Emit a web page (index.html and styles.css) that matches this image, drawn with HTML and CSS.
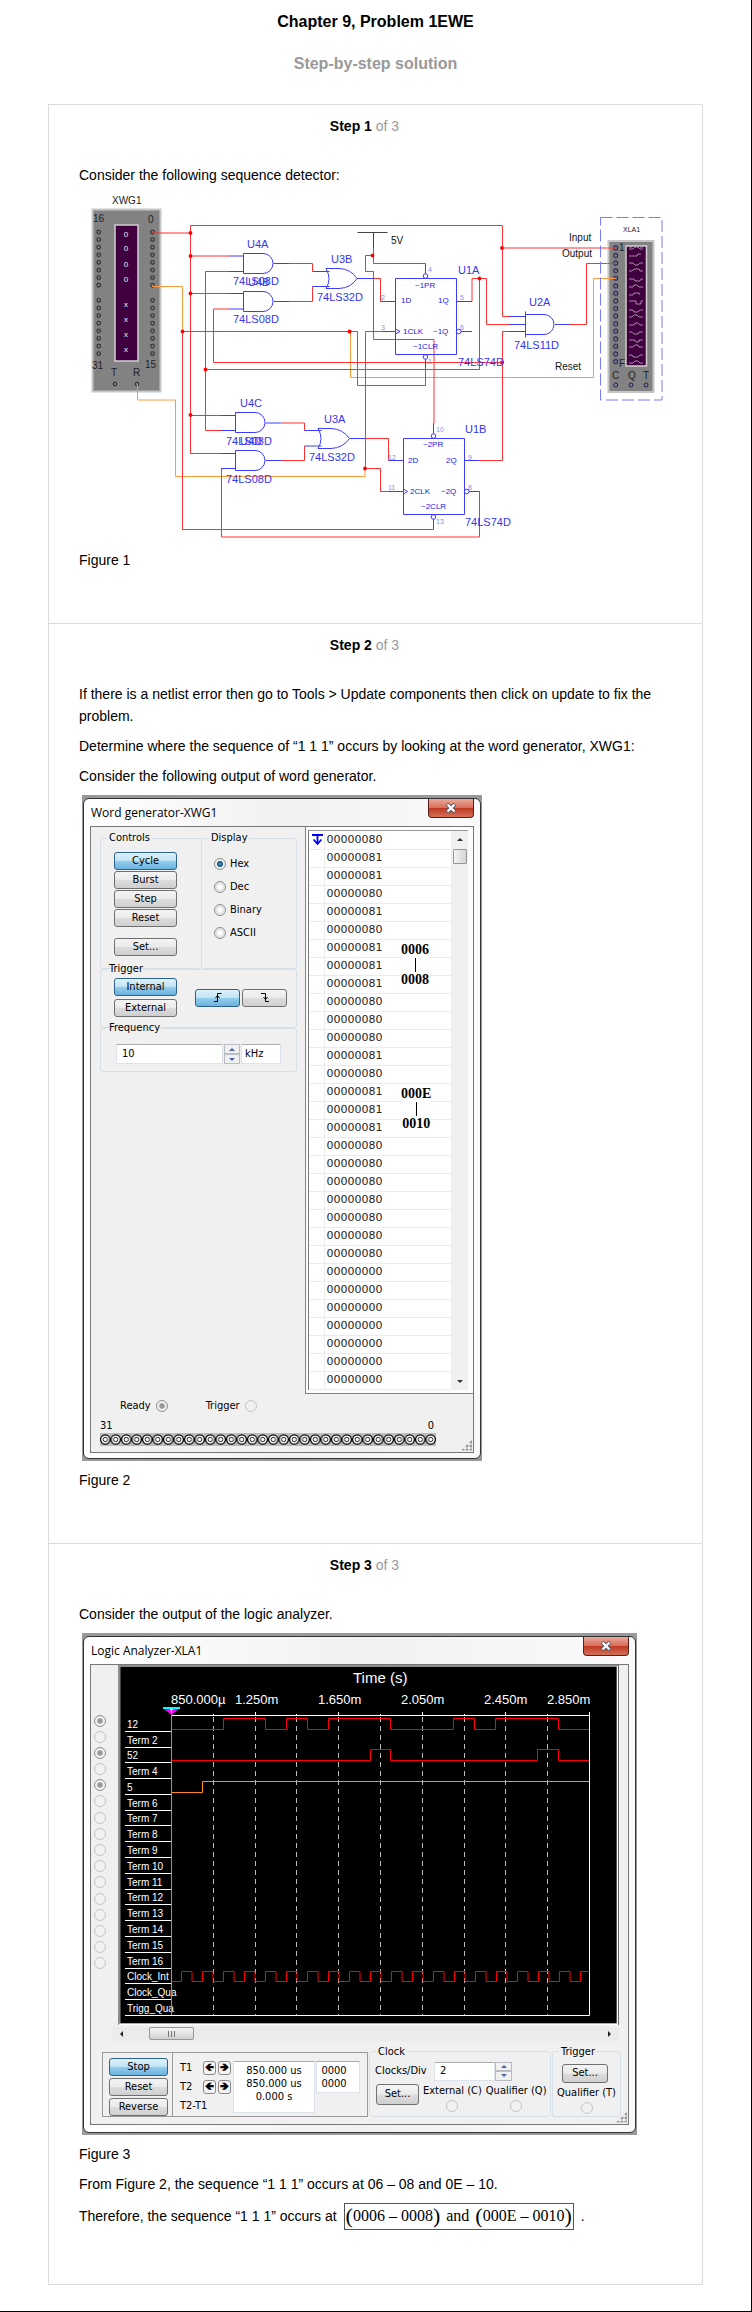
FILE: index.html
```html
<!DOCTYPE html>
<html lang="en">
<head>
<meta charset="utf-8">
<meta name="viewport" content="width=device-width, initial-scale=1">
<title>Chapter 9, Problem 1EWE</title>
<link rel="stylesheet" href="styles.css">
</head>
<body>
<header class="page-head">
<h1 class="title">Chapter 9, Problem 1EWE</h1>
<p class="subtitle">Step-by-step solution</p>
</header>
<main class="steps">
<section class="step">
<h2 class="step-title">Step 1 <span class="step-of">of 3</span></h2>
<div class="step-body">
<p>Consider the following sequence detector:</p>
<svg class="circuit" viewBox="79 194 600 347" role="img" aria-label="Sequence detector circuit">
<defs>
<pattern id="pinsL" x="94" y="228" width="10" height="7.6" patternUnits="userSpaceOnUse"><circle cx="4.7" cy="4" r="1.8" class="pin"/></pattern>
<pattern id="pinsR" x="148" y="228" width="10" height="7.6" patternUnits="userSpaceOnUse"><circle cx="4.5" cy="4" r="1.8" class="pin"/></pattern>
<pattern id="pinsA" x="611" y="244.2" width="10" height="7.57" patternUnits="userSpaceOnUse"><circle cx="4.7" cy="3.8" r="2" class="pin navy"/></pattern>
</defs>
<!-- word generator -->
<rect x="92.5" y="209.500" width="68" height="182" fill="#828282" stroke="#c6c6c6" stroke-width="2"/>
<rect x="94" y="228" width="10" height="60.800" fill="url(#pinsL)"/>
<rect x="94" y="296.400" width="10" height="60.800" fill="url(#pinsL)"/>
<rect x="148" y="228" width="10" height="60.800" fill="url(#pinsR)"/>
<rect x="148" y="296.400" width="10" height="60.800" fill="url(#pinsR)"/>
<circle cx="115" cy="384" r="1.800" class="pin"/><circle cx="137" cy="384" r="1.800" class="pin"/>
<rect x="115" y="225" width="23" height="136" fill="#400040" stroke="#d0d0d0" stroke-width="1.500"/>
<g class="t-lamp"><text x="126" y="237">0</text><text x="126" y="251">0</text><text x="126" y="267">0</text><text x="126" y="282">0</text><text x="126" y="307">x</text><text x="126" y="322">x</text><text x="126" y="337">x</text><text x="126" y="352">x</text></g>
<g class="t-dev"><text x="112" y="204">XWG1</text><text x="93" y="222">16</text><text x="148" y="223">0</text><text x="92" y="369">31</text><text x="145" y="368">15</text><text x="111" y="376">T</text><text x="133" y="376">R</text></g>
<!-- wires -->
<g class="wire orange">
<path d="M152 286.500H182.500V331.500"/>
<path d="M350.500 331.500V377.500H593.500V278.500H616"/>
<path d="M137.500 384V400H175.500V476.500H365V468"/>
</g>
<g class="wire red">
<path d="M152 233H190.500"/>
<path d="M190.500 453.500V225.500H502.500V316.500H509"/>
<path d="M190.500 256H229M190.500 293.500H229M190.500 415.500H221M190.500 453.500H221"/>
<path d="M229 271.500H205.500V430.500H221M205.500 369.500H479.500V278.500"/>
<path d="M229 309H213.500V362.500H502"/>
<path d="M182.500 331.500H357.500V385.500H425.500V368"/>
<path d="M182.500 331.500V529.500H433.500"/>
<path d="M382 331.500H365.500V468.500H380.500V491.500H388"/>
<path d="M289 263.500H312.500V271.500M289 301.500H312.500V286.500"/>
<path d="M281 423H304.500V430.500M281 460.500H304.500V446"/>
<path d="M365 438.500H388.500V460.500"/>
<path d="M373.500 278.500H380.500V301.500"/>
<path d="M373.500 248V263.500H425.500"/>
<path d="M373.500 255.500H365.500V271.500H373.500V339.500H434V423"/>
<path d="M472 301.500V278.500H486.500V324.500H509"/>
<path d="M570 324.500H586.500V263.500H616M502.500 248H616"/>
<path d="M509 331.500H502.500V460.500H479"/>
<path d="M221.500 468.500V537H479.500V491.500"/>
</g>
<g fill="red"><circle cx="190.500" cy="233" r="1.900"/><circle cx="190.500" cy="256" r="1.900"/><circle cx="190.500" cy="293.500" r="1.900"/><circle cx="190.500" cy="415" r="1.900"/><circle cx="205.500" cy="369.500" r="1.900"/><circle cx="182.500" cy="331.500" r="1.900"/><circle cx="349.500" cy="331.500" r="1.900"/><circle cx="372.500" cy="255.500" r="1.900"/><circle cx="365" cy="468.500" r="1.900"/><circle cx="479.500" cy="278.500" r="1.900"/><circle cx="502" cy="248" r="1.900"/><circle cx="502" cy="362.500" r="1.900"/></g>
<path class="wire black" d="M357.500 232.500H387.500M373.500 232.500V248"/>
<!-- gates and flip-flops -->
<g class="wire blue">
<path d="M229 256H243M229 271.500H243M273.500 263.500H289M229 293.500H243M229 309H243M273.500 301.500H289"/>
<path d="M243.500 253.500H263A10 10 0 0 1 263 273.500H243.500ZM243.500 291.500H263A10 10 0 0 1 263 311.500H243.500Z"/>
<path d="M312.500 271.500H329.500M312.500 286.500H329.500M357 278.500H373.500M326 268.500H339Q351 269 357 278.500Q351 288 339 288.500H326Q332 279 326 268.500Z"/>
<path d="M221 415.500H235M221 430.500H235M265.500 423H281M221 453.500H235M221 468.500H235M265.500 460.500H281"/>
<path d="M235.500 412.500H255A10 10 0 0 1 255 432.500H235.500ZM235.500 450.500H255A10 10 0 0 1 255 470.500H235.500Z"/>
<path d="M304.500 430.500H321.500M304.500 446H321.500M349.500 438.500H365M318 428.500H331Q343 429 349.500 438.500Q343 448 331 448.500H318Q324 439 318 428.500Z"/>
<path d="M395.500 278.500H456.500V354.500H395.500ZM380.500 301.500H395.500M382 331.500H395.500M395.500 329L400 331.500L395.500 334M456.500 301.500H472M461 331.500H472M425.500 263.500V274M425.500 359V368"/>
<circle cx="425.500" cy="276" r="2.300"/><circle cx="425.500" cy="357" r="2.300"/><circle cx="458.700" cy="331.500" r="2.300"/>
<path d="M403.500 438.500H464.500V514.500H403.500ZM388.500 460.500H403.500M388 491.500H403.500M403.500 489L407.500 491.500L403.500 494M464.500 460.500H479M469 491.500H479.500M433.500 423V433.500M433.500 519V529.500"/>
<circle cx="433.500" cy="436" r="2.300"/><circle cx="433.500" cy="517" r="2.300"/><circle cx="466.700" cy="491.500" r="2.300"/>
<path d="M509 316.500H525M509 324.500H525M509 331.500H525M525.500 311.500V337.500M525.500 314.500H544A10 10 0 0 1 544 334.500H525.500M555 324.500H570"/>
</g>
<g class="t-part">
<text x="247" y="248">U4A</text><text x="233" y="285">74LS08D</text><text x="248" y="286">U4B</text><text x="233" y="323">74LS08D</text><text x="331" y="263">U3B</text><text x="317" y="301">74LS32D</text>
<text x="240" y="407">U4C</text><text x="226" y="445">74LS08D</text><text x="240" y="445">U4D</text><text x="226" y="483">74LS08D</text><text x="324" y="423">U3A</text><text x="309" y="461">74LS32D</text>
<text x="458" y="274">U1A</text><text x="458" y="366">74LS74D</text><text x="465" y="433">U1B</text><text x="465" y="526">74LS74D</text><text x="529" y="306">U2A</text><text x="514" y="349">74LS11D</text>
</g>
<g class="t-pin"><text x="415" y="288">~1PR</text><text x="401" y="303">1D</text><text x="438" y="303">1Q</text><text x="403" y="334">1CLK</text><text x="433" y="334">~1Q</text><text x="413" y="349">~1CLR</text>
<text x="423" y="447">~2PR</text><text x="408" y="463">2D</text><text x="446" y="463">2Q</text><text x="410" y="494">2CLK</text><text x="441" y="494">~2Q</text><text x="421" y="509">~2CLR</text></g>
<g class="t-num"><text x="428" y="272">4</text><text x="381" y="300">2</text><text x="460" y="300">5</text><text x="381" y="330">3</text><text x="460" y="330">6</text><text x="428" y="364">1</text><text x="436" y="432">10</text><text x="388" y="460">12</text><text x="468" y="460">9</text><text x="388" y="490">11</text><text x="468" y="490">8</text><text x="436" y="524">13</text></g>
<g class="t-net"><text x="391" y="244">5V</text><text x="569" y="241">Input</text><text x="562" y="257">Output</text><text x="555" y="370">Reset</text></g>
<!-- logic analyzer -->
<path d="M600.500 217.500H662V400H600.500Z" fill="none" stroke="#7a7aff" stroke-dasharray="12 4"/>
<rect x="608.500" y="241" width="45" height="151" fill="#828282" stroke="#c6c6c6" stroke-width="2"/>
<rect x="626" y="246" width="20.500" height="120" fill="#400040" stroke="#d0d0d0" stroke-width="1.500"/>
<rect x="611" y="244.200" width="10" height="121.120" fill="url(#pinsA)"/>
<path class="wire red" d="M608 248H615.500M608 263.500H615.500"/><path class="wire orange" d="M608 278.500H615.500"/>
<circle cx="615.700" cy="385" r="2" class="pin navy"/><circle cx="631" cy="385" r="2" class="pin navy"/><circle cx="646" cy="385" r="2" class="pin navy"/>
<path fill="none" stroke="#bcaebc" stroke-width=".8" d="M629 249h4l2-2h3l2 2h3M629 256h8l1-2h3M629 263h4l2 2h3l2-2h3M629 271h3l2-2h5l1 2h3M629 279h5l1 2h5l1-2h2M629 287h4l1-2h3l2 2h4M629 295h4l1-2h5l1 2M629 301h7v3h5v-3h2M629 310h4l1 2h4l2-2h3M629 317h3l2-2h3l2 2h4M629 325h5l1-2h3l2 2h3M629 332h3l2 2h4l1-2h4M629 340h6l1 2h3v-2h4M629 347h4l2-2h3l1 2h4M629 355h3l1 2h5l2-2h3M629 363h4l2-2h3l2 2h3M629 247h3M640 247h3"/>
<g class="t-dev"><text x="619" y="251">1</text><text x="619" y="367">F</text><text x="612" y="379">C</text><text x="628" y="379">Q</text><text x="643" y="379">T</text></g>
<text class="t-xla" x="623" y="232">XLA1</text>
</svg>
<p>Figure 1</p>
</div>
</section>

<section class="step">
<h2 class="step-title">Step 2 <span class="step-of">of 3</span></h2>
<div class="step-body">
<p>If there is a netlist error then go to Tools &gt; Update components then click on update to fix the problem.</p>
<p>Determine where the sequence of “1 1 1” occurs by looking at the word generator, XWG1:</p>
<p>Consider the following output of word generator.</p>
<div class="shot shot-word">
<div class="window">
<div class="titlebar"><span>Word generator-XWG1</span><button class="close" type="button" aria-label="Close word generator"><svg width="12" height="10" viewBox="0 0 12 10"><path d="M2 1L10 9M10 1L2 9" stroke="#555a6a" stroke-width="4"/><path d="M2.500 1.500L9.500 8.500M9.500 1.500L2.500 8.500" stroke="#fff" stroke-width="2.200"/></svg></button></div>
<div class="panel">
<div class="word-top">
<div class="word-left">
<div class="pair">
<fieldset class="group controls"><legend>Controls</legend>
<button class="btn on" type="button">Cycle</button><button class="btn" type="button">Burst</button><button class="btn" type="button">Step</button><button class="btn" type="button">Reset</button><button class="btn set" type="button">Set...</button>
</fieldset>
<fieldset class="group display"><legend>Display</legend>
<label><input type="radio" name="disp" checked>Hex</label><label><input type="radio" name="disp">Dec</label><label><input type="radio" name="disp">Binary</label><label><input type="radio" name="disp">ASCII</label>
</fieldset>
</div>
<fieldset class="group joined"><legend>Trigger</legend>
<div class="trig">
<div class="trig-src"><button class="btn on" type="button">Internal</button><button class="btn" type="button">External</button></div>
<div class="trig-edge"><button class="btn on" type="button" aria-label="Rising edge"><svg width="8" height="9" viewBox="0 0 8 9"><path d="M0 8.500H3.500V.5H7.500M1.500 5L3.500 2.500L5.500 5" fill="none" stroke="#000"/></svg></button><button class="btn" type="button" aria-label="Falling edge"><svg width="8" height="9" viewBox="0 0 8 9"><path d="M0 .5H4.500V8.500H8M2.500 4L4.500 6.500L6.500 4" fill="none" stroke="#000"/></svg></button></div>
</div>
</fieldset>
<fieldset class="group joined"><legend>Frequency</legend>
<div class="freq"><input class="box" type="text" value="10" aria-label="Frequency"><span class="spin"><button type="button" aria-label="Increase frequency"></button><button class="down" type="button" aria-label="Decrease frequency"></button></span><input class="box unit" type="text" value="kHz" aria-label="Unit"></div>
</fieldset>
</div>
<div class="list-frame">
<div class="list">
<table class="words"><tbody>
<tr><td><svg width="11" height="12" viewBox="0 0 11 12"><path d="M0 1H11M5.500 1V9M1.500 5.500L5.500 10L9.500 5.500M5.500 5V10" fill="none" stroke="#00f" stroke-width="1.800"/></svg></td><td>00000080</td></tr>
<tr><td></td><td>00000081</td></tr><tr><td></td><td>00000081</td></tr><tr><td></td><td>00000080</td></tr><tr><td></td><td>00000081</td></tr><tr><td></td><td>00000080</td></tr><tr><td></td><td>00000081</td></tr><tr><td></td><td>00000081</td></tr><tr><td></td><td>00000081</td></tr><tr><td></td><td>00000080</td></tr><tr><td></td><td>00000080</td></tr><tr><td></td><td>00000080</td></tr><tr><td></td><td>00000081</td></tr><tr><td></td><td>00000080</td></tr><tr><td></td><td>00000081</td></tr><tr><td></td><td>00000081</td></tr><tr><td></td><td>00000081</td></tr><tr><td></td><td>00000080</td></tr><tr><td></td><td>00000080</td></tr><tr><td></td><td>00000080</td></tr><tr><td></td><td>00000080</td></tr><tr><td></td><td>00000080</td></tr><tr><td></td><td>00000080</td></tr><tr><td></td><td>00000080</td></tr><tr><td></td><td>00000000</td></tr><tr><td></td><td>00000000</td></tr><tr><td></td><td>00000000</td></tr><tr><td></td><td>00000000</td></tr><tr><td></td><td>00000000</td></tr><tr><td></td><td>00000000</td></tr><tr><td></td><td>00000000</td></tr>
</tbody></table>
<div class="vscroll"><span class="tri up"></span><span class="vthumb"></span><span class="tri dn"></span></div>
<div class="note note-a"><b>0006</b><i></i><b>0008</b></div>
<div class="note note-b"><b>000E</b><i></i><b>0010</b></div>
</div>
</div>
</div>
<div class="status"><label>Ready<input class="dim" type="radio" name="ready" checked></label><label>Trigger<input class="faint" type="radio" name="trg"></label></div>
<div class="bits"><div class="bit-ends"><span>31</span><span>0</span></div>
<svg width="336" height="13" viewBox="0 0 336 13" aria-hidden="true"><defs><pattern id="bit" width="10.5" height="13" patternUnits="userSpaceOnUse"><rect width="11" height="13" fill="#bdbdbd"/><circle cx="5.250" cy="6.500" r="4.700" fill="#fff" stroke="#000" stroke-width="1.200"/><circle cx="5.250" cy="6.500" r="2.200" fill="#fff" stroke="#000" stroke-width=".9"/></pattern></defs><rect width="336" height="13" fill="url(#bit)"/></svg></div>
<span class="grip"></span>
</div>
</div>
</div>
<p>Figure 2</p>
</div>
</section>

<section class="step">
<h2 class="step-title">Step 3 <span class="step-of">of 3</span></h2>
<div class="step-body">
<p>Consider the output of the logic analyzer.</p>
<div class="shot shot-logic">
<div class="window">
<div class="titlebar"><span>Logic Analyzer-XLA1</span><button class="close" type="button" aria-label="Close logic analyzer"><svg width="12" height="10" viewBox="0 0 12 10"><path d="M2 1L10 9M10 1L2 9" stroke="#555a6a" stroke-width="4"/><path d="M2.500 1.500L9.500 8.500M9.500 1.500L2.500 8.500" stroke="#fff" stroke-width="2.200"/></svg></button></div>
<div class="panel">
<div class="scope-row">
<div class="terms"><input class="dim" type="radio" name="r1" checked aria-label="Term 1"><input class="faint" type="radio" name="r2" aria-label="Term 2"><input class="dim" type="radio" name="r3" checked aria-label="Term 3"><input class="faint" type="radio" name="r4" aria-label="Term 4"><input class="dim" type="radio" name="r5" checked aria-label="Term 5"><input class="faint" type="radio" name="r6" aria-label="Term 6"><input class="faint" type="radio" name="r7" aria-label="Term 7"><input class="faint" type="radio" name="r8" aria-label="Term 8"><input class="faint" type="radio" name="r9" aria-label="Term 9"><input class="faint" type="radio" name="r10" aria-label="Term 10"><input class="faint" type="radio" name="r11" aria-label="Term 11"><input class="faint" type="radio" name="r12" aria-label="Term 12"><input class="faint" type="radio" name="r13" aria-label="Term 13"><input class="faint" type="radio" name="r14" aria-label="Term 14"><input class="faint" type="radio" name="r15" aria-label="Term 15"><input class="faint" type="radio" name="r16" aria-label="Term 16"></div>
<svg class="scope" viewBox="118 1665 501 360" role="img" aria-label="Logic analyzer traces">
<rect x="118" y="1665" width="501" height="360" fill="#8c8c8c"/><path d="M617.500 1666V2024.500H119" fill="none" stroke="#fff" stroke-width="1.500"/><path d="M618.500 1665V2025" stroke="#666"/>
<rect x="120.500" y="1667" width="496" height="356" fill="#000"/>
<g class="t-axis"><text x="353" y="1683" class="big">Time (s)</text><text x="171" y="1704">850.000µ</text><text x="235" y="1704">1.250m</text><text x="318" y="1704">1.650m</text><text x="401" y="1704">2.050m</text><text x="484" y="1704">2.450m</text><text x="547" y="1704">2.850m</text></g>
<path class="grid" d="M213.500 1717V2015M255.500 1717V2015M296.500 1717V2015M338.500 1717V2015M380.500 1717V2015M422.500 1717V2015M464.500 1717V2015M505.500 1717V2015M547.500 1717V2015"/>
<path class="axis" d="M171 1715.500H589.500M589.500 1712V2015.500H125M213.500 1714V1715M255.500 1712V1715M296.500 1714V1715M338.500 1712V1715M380.500 1714V1715M422.500 1712V1715M464.500 1714V1715M505.500 1712V1715M547.500 1714V1715"/>
<path class="axis" d="M125 1731.500H171M125 1747.500H171M125 1762.500H171M125 1778.500H171M125 1794.500H171M125 1810.500H171M125 1825.500H171M125 1841.500H171M125 1857.500H171M125 1873.500H171M125 1889.500H171M125 1904.500H171M125 1920.500H171M125 1936.500H171M125 1952.500H171M125 1968.500H171M125 1983.500H171M125 1999.500H171"/>
<g class="t-term"><text x="127" y="1728">12</text><text x="127" y="1744">Term 2</text><text x="127" y="1759">52</text><text x="127" y="1775">Term 4</text><text x="127" y="1791">5</text><text x="127" y="1807">Term 6</text><text x="127" y="1822">Term 7</text><text x="127" y="1838">Term 8</text><text x="127" y="1854">Term 9</text><text x="127" y="1870">Term 10</text><text x="127" y="1886">Term 11</text><text x="127" y="1901">Term 12</text><text x="127" y="1917">Term 13</text><text x="127" y="1933">Term 14</text><text x="127" y="1949">Term 15</text><text x="127" y="1965">Term 16</text><text x="127" y="1980">Clock_Int</text><text x="127" y="1996">Clock_Qua</text><text x="127" y="2012">Trigg_Qua</text></g>
<g class="trace">
<path d="M171 1729.500H223.500V1718.500H265.500V1729.500H286.500V1718.500H307.500V1729.500H328.500V1718.500H390.500V1729.500H453.500V1718.500H474.500V1729.500H495.500V1718.500H558.500V1729.500H589"/>
<path d="M171 1760.500H370.500V1749.500H390.500V1760.500H537.500V1749.500H558.500V1760.500H589"/>
<path class="amber" d="M171 1792.500H202.500V1781.500H589"/>
<path d="M171 1981.500h10.500v-10h10.500v10h10.500v-10h10.500v10h10.500v-10h10.500v10h10.500v-10h10.500v10h10.500v-10h10.500v10h10.500v-10h10.500v10h10.500v-10h10.500v10h10.500v-10h10.500v10h10.500v-10h10.500v10h10.500v-10h10.500v10h10.500v-10h10.500v10h10.500v-10h10.500v10h10.500v-10h10.500v10h10.500v-10h10.500v10h10.500v-10h10.500v10h10.500v-10h10.500v10h10.500v-10h10.500v10h10.500v-10h10.500v10h10.500v-10h10.500v10h10.500v-10h9"/>
</g>
<path d="M171.500 1712V2015" stroke="#0f0"/>
<path d="M163 1708H180" stroke="#0ff" stroke-width="2"/><path d="M164.500 1709H178.500L171.500 1715Z" fill="#f0f"/><path d="M170 1709.500h3M171.500 1709V1713" stroke="#ff0"/>
</svg>
</div>
<div class="hscroll"><span class="tri lt"></span><span class="hthumb"></span><span class="tri rt"></span></div>
<div class="dock">
<div class="cursors">
<div class="run"><button class="btn on" type="button">Stop</button><button class="btn" type="button">Reset</button><button class="btn" type="button">Reverse</button></div>
<div class="tgrid">
<span>T1</span><button class="arrow" type="button" aria-label="T1 left">🡸</button><button class="arrow" type="button" aria-label="T1 right">🡺</button>
<span>T2</span><button class="arrow" type="button" aria-label="T2 left">🡸</button><button class="arrow" type="button" aria-label="T2 right">🡺</button>
<span class="wide">T2-T1</span>
</div>
<div class="readout times"><span>850.000 us</span><span>850.000 us</span><span>0.000 s</span></div>
<div class="readout codes"><span>0000</span><span>0000</span></div>
</div>
<fieldset class="group clock"><legend>Clock</legend>
<div class="clock-div"><label for="cdiv">Clocks/Div</label><span class="spinbox"><input id="cdiv" class="box" type="text" value="2"><span class="spin"><button type="button" aria-label="More clocks"></button><button class="down" type="button" aria-label="Fewer clocks"></button></span></span></div>
<div class="clock-src"><button class="btn" type="button">Set...</button><label class="stack">External (C)<input class="faint" type="radio" name="ext"></label><label class="stack">Qualifier (Q)<input class="faint" type="radio" name="qq"></label></div>
</fieldset>
<fieldset class="group trigger"><legend>Trigger</legend><button class="btn" type="button">Set...</button><label class="stack">Qualifier (T)<input class="faint" type="radio" name="qt"></label></fieldset>
</div>
<span class="grip"></span>
</div>
</div>
</div>
<p>Figure 3</p>
<p>From Figure 2, the sequence “1 1 1” occurs at 06 – 08 and 0E – 10.</p>
<p class="result">Therefore, the sequence “1 1 1” occurs at <span class="formula"><span class="par">(</span>0006 – 0008<span class="par">)</span><span class="and">and</span><span class="par">(</span>000E – 0010<span class="par">)</span></span> .</p>
</div>
</section>
</main>
</body>
</html>
```
FILE: styles.css
```css
* { box-sizing: border-box; }
body {
  margin: 0;
  padding: 11px 48px 26px 48px;
  border-right: 1px solid #000;
  border-bottom: 1px solid #000;
  background: #fff;
  color: #000;
  font: 14px/22px "Liberation Sans", Arial, sans-serif;
}
.page-head { text-align: center; }
.title, .subtitle { margin: 0; font-size: 16px; font-weight: bold; line-height: 22px; }
.subtitle { margin-top: 20px; color: #999; }
.steps { margin-top: 29px; border: solid #dcdcdc; border-width: 0 1px 1px; }
.step { padding: 10px 30px 52px; border-top: 1px solid #dcdcdc; }
.step:last-child { padding-bottom: 54px; }
.step-title { margin: 0 0 27px; padding-right: 22px; text-align: center; font-size: 14px; line-height: 22px; }
.step-of { color: #999; font-weight: normal; }
.step-body { display: flex; flex-direction: column; gap: 8px; }
.step-body > p { margin: 0; }

/* circuit drawing */
.circuit { display: block; width: calc(100% + 7px); font-family: "Liberation Sans", Arial, sans-serif; overflow: visible; }
.wire { fill: none; stroke-width: 1; }
.red { stroke: #ff3030; }
.orange { stroke: #ff9a3c; }
.blue { stroke: #3c3cff; }
.black { stroke: #444; }
.pin { fill: none; stroke: #222; stroke-width: 1; }
.navy { stroke: #20205a; }
.t-dev { font-size: 10px; fill: #222; }
.t-lamp { font-size: 8px; fill: #eee; text-anchor: middle; }
.t-part { font-size: 11px; fill: #3535f5; }
.t-pin { font-size: 8px; fill: #2020f0; }
.t-num { font-size: 7px; fill: #8a8aff; }
.t-net { font-size: 10px; fill: #111; }
.t-xla { font-size: 7px; fill: #222; }

/* application windows */
.shot { max-width: 100%; margin-left: 3px; padding: 3px 1px 2px; background: #999; color: #000; font: 11px/14px "DejaVu Sans Condensed", Tahoma, sans-serif; }
.shot-word { width: 400px; }
.shot-logic { width: 555px; }
.window { border: 1px solid #333; border-radius: 6px; padding: 0 6px 5px; background: linear-gradient(90deg, #fff, #f1f1f1 50%, #fafafa); }
.titlebar { display: flex; justify-content: space-between; height: 27px; font: 12px/27px "Open Sans", "Noto Sans", sans-serif; }
.titlebar span { padding-left: 1px; line-height: 27px; }
.close { width: 46px; height: 19px; padding: 0; border: 1px solid #5b1f1b; border-top: 0; border-radius: 0 0 4px 4px; background: linear-gradient(#eaa99b, #d9705c 48%, #bf3a22 52%, #d5705a); display: grid; place-items: center; }
.panel { position: relative; border: 1px solid #777; background: #f0f0f0; }
.grip { position: absolute; right: 1px; bottom: 1px; width: 11px; height: 11px; background: radial-gradient(circle at 2px 2px, #999 1px, transparent 2px) 0 0 / 4px 4px; clip-path: polygon(100% 0, 100% 100%, 0 100%); }
.group { min-width: 0; margin: 0; padding: 0; border: 1px solid #d5dfe5; border-radius: 3px; }
.group legend { margin-left: 6px; padding: 0 2px; }
.btn { display: grid; place-items: center; width: 63px; height: 18px; padding: 0; border: 1px solid #707070; border-radius: 3px; background: linear-gradient(#f4f4f4, #ebebeb 48%, #dcdcdc 52%, #cfcfcf); color: #000; font: inherit; }
.btn.on { border-color: #2c628b; background: linear-gradient(#dff2fb, #bfe3f6 48%, #93cdec 52%, #6bb2dc); }
input[type="radio"] { appearance: none; flex: none; width: 12px; height: 12px; margin: 0; border: 1px solid #8e8f8f; border-radius: 50%; background: radial-gradient(circle, #fff 20%, #ddd 60%, #f4f4f4 70%); }
input[type="radio"]:checked { background: radial-gradient(circle, #49b5e6 0, #12456b 35%, #f0f0f0 50%); }
input.dim:checked { background: radial-gradient(circle, #999 0, #999 30%, #f0f0f0 48%); }
input[type="radio"].faint { border-color: #c4c4c4; background: #f1f1f1; }
.box { min-width: 0; border: 1px solid #dde3ea; border-top-color: #abadb3; border-radius: 1px; background: #fff; padding: 0 5px; font: inherit; color: #000; }
.spin { display: flex; flex-direction: column; justify-content: space-between; width: 16px; }
.spin button { display: grid; place-items: center; flex: 1; padding: 0; border: 1px solid #b9bcc2; background: #f0f0f0; }
.spin button::before { content: ""; border: solid transparent; border-width: 0 3px 3px; border-bottom-color: #4a62a8; }
.spin .down::before { border-width: 3px 3px 0; border-top-color: #4a62a8; }

/* word generator */
.word-top { display: grid; grid-template-columns: 1fr 168px; }
.word-left { padding: 4px 8px 0 9px; }
.pair { display: grid; grid-template-columns: 102px 1fr; }
.display { border-left: 0; }
.display legend { margin-left: 7px; }
.controls .btn { margin: 0 0 1px 13px; }
.controls legend, .display legend { margin-bottom: 7px; }
.controls .set { margin: 11px 0 12px 13px; }
.display label { display: flex; align-items: center; gap: 4px; height: 23px; padding-left: 12px; }
.joined { margin-top: -7px; }
.trig { display: flex; align-items: center; gap: 18px; padding: 2px 0 10px 13px; }
.trig-src { display: grid; gap: 3px; }
.trig-edge { display: flex; gap: 2px; }
.trig-edge .btn { width: 45px; }
.freq { display: flex; gap: 1px; height: 28px; padding: 1px 0 7px 15px; margin-top: 8px; }
.freq .box { width: 107px; }
.freq .unit { width: 40px; padding: 0 3px; }
.list-frame { border: 1px solid #808488; border-top: 0; border-right: 0; padding: 3px 5px 3px 2px; background: #fdfdfd; }
.list { position: relative; display: flex; border-left: 1px solid #777; border-top: 1px solid #999; background: #fff; }
.words { flex: 1; border-collapse: collapse; font: 11px/16px "DejaVu Sans", Verdana, sans-serif; color: #222; }
.words td { height: 18px; padding: 0 0 0 2px; border-bottom: 1px solid #ececec; }
.words td:first-child { width: 15px; padding: 0 0 0 3px; border-right: 1px solid #ececec; }
.words svg { display: block; }
.vscroll { display: flex; flex-direction: column; align-items: center; width: 17px; background: #f0f0f0; }
.tri { border: 3px solid transparent; }
.up { margin-top: 4px; border-bottom-color: #333; }
.dn { margin: auto 0 4px; border-top-color: #333; }
.vthumb { width: 14px; height: 15px; margin-top: 8px; border: 1px solid #979797; border-radius: 1px; background: linear-gradient(90deg, #f5f5f5, #d4d4d4); }
.note { position: absolute; left: 92px; display: grid; justify-items: center; font: bold 14px/16px "Liberation Serif", serif; background: #fff; }
.note i { width: 1px; height: 14px; background: #000; }
.note-a { top: 111px; }
.note-b { top: 255px; }
.status { display: flex; gap: 38px; margin-top: 5px; padding-left: 29px; }
.status label { display: flex; align-items: center; gap: 5px; }
.bits { width: 345px; padding: 6px 0 6px 9px; }
.bits svg { display: block; }
.bit-ends { display: flex; justify-content: space-between; padding-right: 2px; }

/* logic analyzer */
.shot-logic .panel { padding-bottom: 7px; }
.shot-logic .window { padding-bottom: 7px; }
.scope-row { display: grid; grid-template-columns: 27px 1fr 9px; }
.terms { display: flex; flex-direction: column; align-items: center; justify-content: space-between; padding: 50px 10px 55px 0; }
.scope { display: block; width: 100%; font-family: "Liberation Sans", Arial, sans-serif; }
.t-axis { font-size: 13px; fill: #fff; }
.t-axis .big { font-size: 15px; }
.t-term { font-size: 10px; fill: #fff; }
.grid { stroke: #bbb; stroke-dasharray: 5 4; }
.axis { fill: none; stroke: #fff; }
.trace { fill: none; stroke: #f00; }
.amber { stroke: #ff8c1a; }
.hscroll { display: flex; align-items: center; height: 14px; margin: 2px 9px 0 21px; padding: 0 5px; background: #ebebeb; }
.lt { border-right-color: #222; }
.rt { margin-left: auto; border-left-color: #222; }
.hthumb { width: 45px; height: 13px; margin-left: 26px; border: 1px solid #979797; border-radius: 2px; background: repeating-linear-gradient(90deg, #777 0 1px, transparent 1px 3px) center / 7px 6px no-repeat, linear-gradient(#f5f5f5, #d0d0d0); }
.dock { display: grid; grid-template-columns: 266px 1fr 69px; gap: 1px; margin: 4px 7px 0 11px; }
.cursors { display: flex; margin-top: 7px; border: 1px solid #999; }
.run { display: grid; align-content: start; gap: 2px; padding: 5px 4px 0 6px; border-right: 1px solid #999; }
.run .btn { width: 59px; }
.tgrid { display: grid; grid-template-columns: 21px 13px 13px; gap: 5px 2px; align-content: start; padding: 8px 2px 0 7px; }
.wide { grid-column: span 3; }
.arrow { display: grid; place-items: center; height: 14px; padding: 0; border: 1px solid #888; border-radius: 3px; background: #f4f4f4; font: bold 11px/12px "DejaVu Sans", sans-serif; color: #000; }
.readout { display: grid; align-content: start; justify-items: center; padding-top: 2px; border: 1px solid #dde3ea; border-top-color: #abadb3; background: #fff; line-height: 13px; }
.times { width: 82px; height: 52px; margin: 8px 1px 0 0; }
.codes { width: 44px; height: 32px; margin-top: 8px; padding-right: 8px; }
.clock-div { display: flex; justify-content: space-between; align-items: center; margin: 3px 38px 0 5px; }
.spinbox { display: flex; height: 19px; }
.spinbox .box { width: 61px; }
.spinbox .spin { width: 17px; }
.clock-src { display: flex; gap: 4px; padding: 3px 4px 0 6px; }
.clock-src .btn { width: 43px; height: 21px; flex: none; }
.stack { display: grid; justify-items: center; gap: 2px; white-space: nowrap; }
.trigger .btn { width: 46px; height: 19px; margin: 5px 0 3px 9px; }

/* closing answer */
.result { display: flex; align-items: center; gap: 7px; }
.formula { display: inline-flex; align-items: center; height: 27px; padding: 0 1px; border: 1px solid #555; font: 16px/22px "Liberation Serif", "Times New Roman", serif; white-space: pre; }
.par { font-size: 22px; }
.and { padding: 0 6px; }
```
